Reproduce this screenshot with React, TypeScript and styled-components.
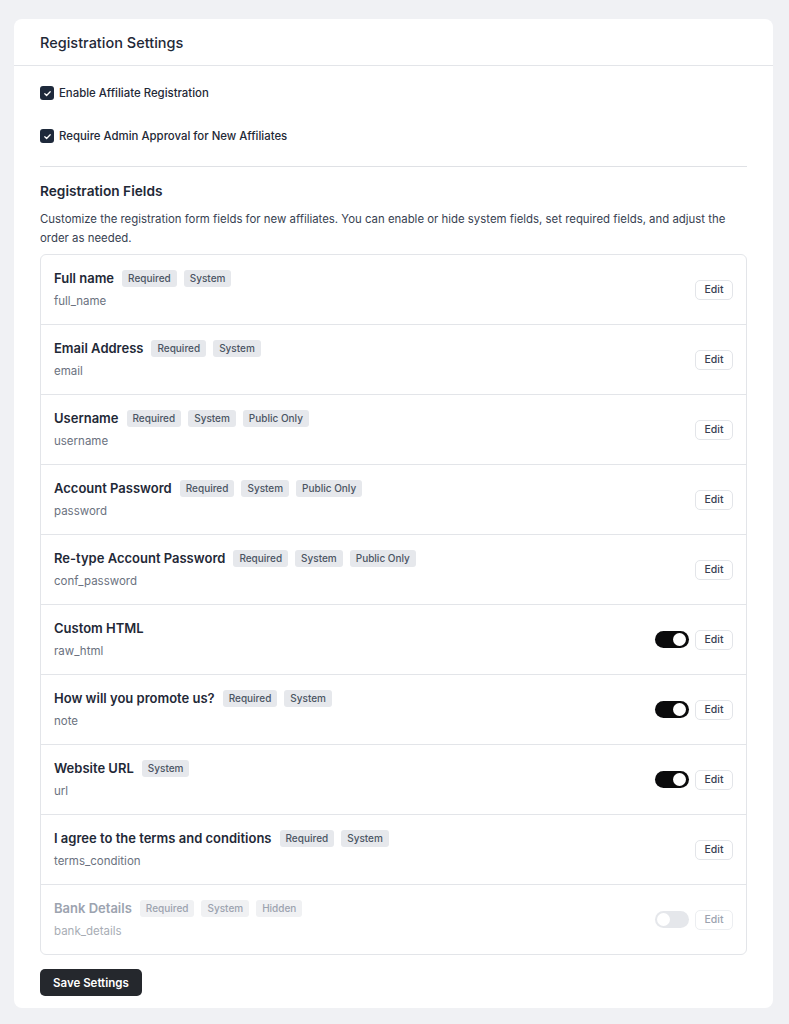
import React from 'react';
import styled, { createGlobalStyle } from 'styled-components';

const GlobalStyle = createGlobalStyle`
  html, body {
    margin: 0;
    padding: 0;
    background: #f0f1f4;
    font-family: Inter, "Noto Sans", "Liberation Sans", sans-serif;
    color: #1f2937;
    -webkit-font-smoothing: antialiased;
  }
  * {
    box-sizing: border-box;
  }
`;

type Field = {
  label: string;
  name: string;
  tags: string[];
  toggle?: 'on' | 'off';
  hidden?: boolean;
};

const fields: Field[] = [
  { label: 'Full name', name: 'full_name', tags: ['Required', 'System'] },
  { label: 'Email Address', name: 'email', tags: ['Required', 'System'] },
  { label: 'Username', name: 'username', tags: ['Required', 'System', 'Public Only'] },
  { label: 'Account Password', name: 'password', tags: ['Required', 'System', 'Public Only'] },
  { label: 'Re-type Account Password', name: 'conf_password', tags: ['Required', 'System', 'Public Only'] },
  { label: 'Custom HTML', name: 'raw_html', tags: [], toggle: 'on' },
  { label: 'How will you promote us?', name: 'note', tags: ['Required', 'System'], toggle: 'on' },
  { label: 'Website URL', name: 'url', tags: ['System'], toggle: 'on' },
  { label: 'I agree to the terms and conditions', name: 'terms_condition', tags: ['Required', 'System'] },
  { label: 'Bank Details', name: 'bank_details', tags: ['Required', 'System', 'Hidden'], toggle: 'off', hidden: true },
];

const Page = styled.div`
  padding: 19px 16px 16px 14px;
`;

const Card = styled.section`
  background: #ffffff;
  border-radius: 8px;
`;

const CardHeader = styled.header`
  height: 47px;
  display: flex;
  align-items: center;
  padding: 0 26px;
  border-bottom: 1px solid #e3e5e9;
`;

const CardTitle = styled.h2`
  margin: 0;
  font-size: 14.5px;
  font-weight: 500;
  color: #1f2937;
`;

const CardBody = styled.div`
  padding: 18px 26px 12px;
`;

const CheckRow = styled.label`
  display: flex;
  align-items: center;
  gap: 5px;
  height: 18px;
  font-size: 11.4px;
  font-weight: 500;
  color: #1f2937;
  & + & {
    margin-top: 25px;
  }
`;

const CheckBox = styled.span`
  width: 14px;
  height: 14px;
  border-radius: 3px;
  background: #1e293b;
  display: inline-flex;
  align-items: center;
  justify-content: center;
`;

const Divider = styled.hr`
  border: 0;
  border-top: 1px solid #dfe1e5;
  margin: 21px 0 14px;
`;

const SectionTitle = styled.h3`
  margin: 0;
  font-size: 13.7px;
  line-height: 20px;
  font-weight: 600;
  color: #1f2937;
`;

const Description = styled.p`
  margin: 9px 0 6px;
  font-size: 11.4px;
  line-height: 19px;
  color: #374151;
`;

const FieldList = styled.div`
  border: 1px solid #e3e5e9;
  border-radius: 6px;
`;

const FieldRow = styled.div<{ $hidden?: boolean }>`
  display: flex;
  align-items: center;
  justify-content: space-between;
  padding: 14px 13px;
  color: ${p => (p.$hidden ? '#9ca3af' : '#1f2937')};
  & + & {
    border-top: 1px solid #e3e5e9;
  }
`;

const FieldInfo = styled.div`
  display: flex;
  flex-direction: column;
  gap: 6px;
`;

const TitleLine = styled.div`
  display: flex;
  align-items: center;
  gap: 7px;
  height: 18px;
`;

const FieldLabel = styled.span`
  font-size: 13px;
  font-weight: 600;
  margin-right: 1px;
`;

const Tag = styled.span<{ $hidden?: boolean }>`
  display: inline-flex;
  align-items: center;
  height: 17px;
  padding: 0 6px;
  border-radius: 3px;
  font-size: 10px;
  font-weight: 500;
  background: ${p => (p.$hidden ? '#f0f1f3' : '#e6e8ec')};
  color: ${p => (p.$hidden ? '#9ca3af' : '#4b5563')};
`;

const FieldKey = styled.span<{ $hidden?: boolean }>`
  font-size: 11.5px;
  line-height: 17px;
  color: ${p => (p.$hidden ? '#a8adb5' : '#6b7280')};
`;

const Actions = styled.div`
  display: flex;
  align-items: center;
  gap: 6px;
`;

const Toggle = styled.span<{ $on: boolean }>`
  position: relative;
  width: 34px;
  height: 17px;
  border-radius: 9px;
  background: ${p => (p.$on ? '#0b0b0c' : '#e5e7eb')};
  &::after {
    content: '';
    position: absolute;
    top: 2px;
    left: ${p => (p.$on ? '18px' : '2px')};
    width: 13px;
    height: 13px;
    border-radius: 50%;
    background: #ffffff;
  }
`;

const EditButton = styled.button<{ $hidden?: boolean }>`
  height: 20px;
  width: 38px;
  padding: 0;
  border: 1px solid ${p => (p.$hidden ? '#eceef1' : '#e3e5e9')};
  border-radius: 5px;
  background: #ffffff;
  font-family: inherit;
  font-size: 10.5px;
  font-weight: 500;
  color: ${p => (p.$hidden ? '#9ca3af' : '#374151')};
  cursor: pointer;
`;

const SaveButton = styled.button`
  display: block;
  margin-top: 14px;
  height: 27px;
  padding: 0 13px;
  border: 0;
  border-radius: 5px;
  background: #25282d;
  color: #ffffff;
  font-family: inherit;
  font-size: 11.5px;
  font-weight: 600;
  cursor: pointer;
`;

const Check = () => (
  <svg width="9" height="9" viewBox="0 0 10 10" fill="none">
    <path d="M2 5.2l2 2L8 3" stroke="#ffffff" strokeWidth="1.4" strokeLinecap="round" strokeLinejoin="round" />
  </svg>
);

const App = () => {
  return (
    <Page>
      <GlobalStyle />
      <Card>
        <CardHeader>
          <CardTitle>Registration Settings</CardTitle>
        </CardHeader>
        <CardBody>
          <CheckRow>
            <CheckBox><Check /></CheckBox>
            Enable Affiliate Registration
          </CheckRow>
          <CheckRow>
            <CheckBox><Check /></CheckBox>
            Require Admin Approval for New Affiliates
          </CheckRow>
          <Divider />
          <SectionTitle>Registration Fields</SectionTitle>
          <Description>
            Customize the registration form fields for new affiliates. You can enable or hide system fields, set
            required fields, and adjust the order as needed.
          </Description>
          <FieldList>
            {fields.map(f => (
              <FieldRow key={f.name} $hidden={f.hidden}>
                <FieldInfo>
                  <TitleLine>
                    <FieldLabel>{f.label}</FieldLabel>
                    {f.tags.map(t => (
                      <Tag key={t} $hidden={f.hidden}>{t}</Tag>
                    ))}
                  </TitleLine>
                  <FieldKey $hidden={f.hidden}>{f.name}</FieldKey>
                </FieldInfo>
                <Actions>
                  {f.toggle && <Toggle $on={f.toggle === 'on'} />}
                  <EditButton $hidden={f.hidden}>Edit</EditButton>
                </Actions>
              </FieldRow>
            ))}
          </FieldList>
          <SaveButton>Save Settings</SaveButton>
        </CardBody>
      </Card>
    </Page>
  );
};

export default App;
